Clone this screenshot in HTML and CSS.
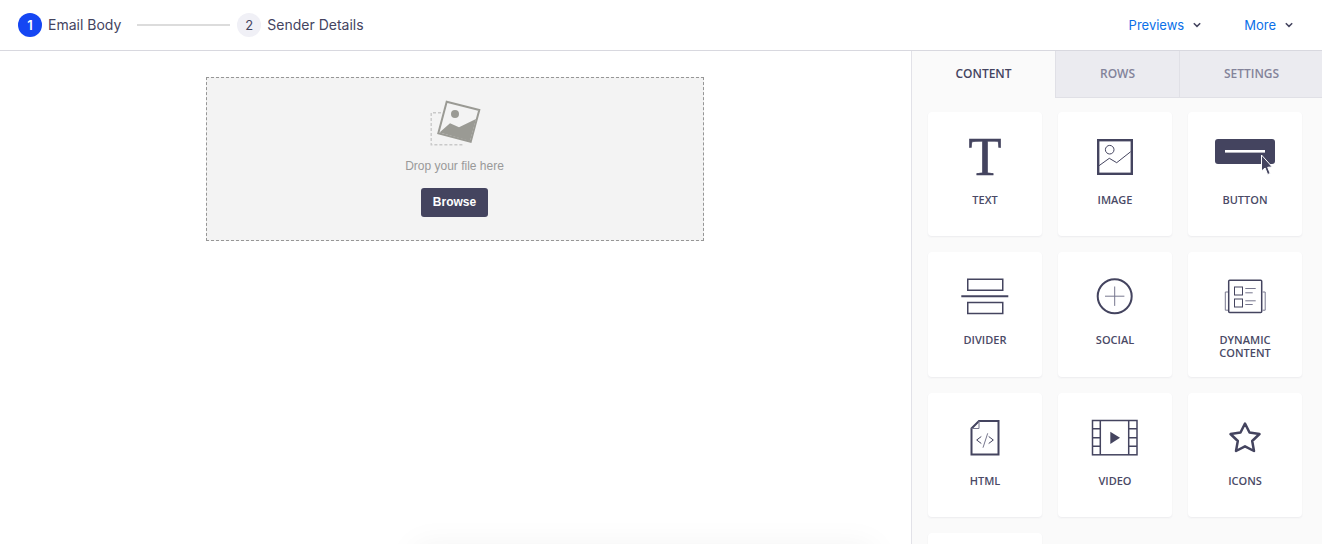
FILE: index.html
```html
<!DOCTYPE html>
<html lang="en">
<head>
    <meta charset="UTF-8">
    <title>Email Body</title>
    <link rel="stylesheet" href="styles.css">
</head>
<body>
    <header class="topbar">
        <div class="steps">
            <span class="step-num active">1</span>
            <span class="step-label">Email Body</span>
            <span class="step-line"></span>
            <span class="step-num">2</span>
            <span class="step-label">Sender Details</span>
        </div>
        <nav class="topnav">
            <a class="topnav-link previews">Previews
                <svg class="chevron" viewBox="0 0 8 6"><path d="M.8 1.2 4 4.4l3.2-3.2"/></svg>
            </a>
            <a class="topnav-link">More
                <svg class="chevron" viewBox="0 0 8 6"><path d="M.8 1.2 4 4.4l3.2-3.2"/></svg>
            </a>
        </nav>
    </header>

    <div class="workspace">
        <main class="canvas">
            <div class="dropzone">
                <svg class="upload-icon" viewBox="0 0 52 48">
                    <path class="upload-dash" d="M12 12.8H2.2v32H35"/>
                    <path class="upload-photo" d="M17.7 1.7 50.3 10l-8.6 31.7L9.3 33.3z"/>
                    <circle class="upload-fill" cx="26" cy="14" r="4"/>
                    <path class="upload-fill" d="M10.500 32.500 21 23.300l9 4L47 19l-6 22z"/>
                </svg>
                <p class="drop-text">Drop your file here</p>
                <button class="browse">Browse</button>
            </div>
            <div class="next-block"></div>
        </main>

        <aside class="sidebar">
            <div class="tabs">
                <div class="tab current">CONTENT</div>
                <div class="tab rows">ROWS</div>
                <div class="tab">SETTINGS</div>
            </div>
            <div class="blocks">
                <div class="block">
                    <svg class="block-icon" viewBox="0 0 60 40"><text class="t-glyph" x="30" y="37" text-anchor="middle">T</text></svg>
                    <div class="block-label">TEXT</div>
                </div>
                <div class="block">
                    <svg class="block-icon" viewBox="0 0 60 40">
                        <rect class="ln25" x="13.200" y="2.200" width="33.600" height="33.600"/>
                        <circle class="ln1" cx="24.700" cy="11.700" r="4.300"/>
                        <path class="ln1" d="M14 27.700l10.300-7.400 7.400 4.400 14-11"/>
                    </svg>
                    <div class="block-label">IMAGE</div>
                </div>
                <div class="block">
                    <svg class="block-icon" viewBox="0 0 60 40">
                        <rect class="solid" x="0" y="1" width="60" height="25" rx="3"/>
                        <rect class="white" x="10" y="12" width="40" height="2.600"/>
                        <path class="cursor" d="M46.500 17v16l3.600-3 2.500 6.500 2.600-1-2.500-6.200 4.500-.4z"/>
                    </svg>
                    <div class="block-label">BUTTON</div>
                </div>
                <div class="block">
                    <svg class="block-icon" viewBox="0 0 60 40">
                        <rect class="ln15" x="12.750" y="1.250" width="35" height="11"/>
                        <path class="ln2" d="M6.300 18.200h47"/>
                        <rect class="ln15" x="12.750" y="24.500" width="35" height="11"/>
                    </svg>
                    <div class="block-label">DIVIDER</div>
                </div>
                <div class="block">
                    <svg class="block-icon" viewBox="0 0 60 40">
                        <circle class="ln2" cx="29.700" cy="18.200" r="17"/>
                        <path class="ln1 soft" d="M20 18.200h19.400M29.700 8.500v19.400"/>
                    </svg>
                    <div class="block-label">SOCIAL</div>
                </div>
                <div class="block">
                    <svg class="block-icon" viewBox="0 0 60 40">
                        <rect class="ln15" x="13.700" y="2.200" width="33" height="32.300" rx="1"/>
                        <path class="ln1 soft" d="M13 14H10.300v18.200H13M47.500 14h2.700v18.200h-2.700"/>
                        <rect class="ln1" x="19.500" y="9" width="8" height="8"/>
                        <rect class="ln1" x="19.500" y="21" width="8" height="8"/>
                        <path class="ln1 soft" d="M30.300 10.500h10.400M30.300 14.800h7.400M30.300 22.800h10.400M30.300 26.500h7.400"/>
                    </svg>
                    <div class="block-label">DYNAMIC<br>CONTENT</div>
                </div>
                <div class="block">
                    <svg class="block-icon" viewBox="0 0 60 40">
                        <path class="ln2" d="M24 2h19.500v33.500h-27V9.500z"/>
                        <path class="ln1 soft" d="M24 2v7.500h-7.500"/>
                        <path class="ln1" d="M26.300 17.500 21.700 21l4.600 3.500M33.700 17.500l4.600 3.500-4.600 3.500"/>
                        <path class="ln1 soft" d="M32.700 14.300 28 28.700"/>
                    </svg>
                    <div class="block-label">HTML</div>
                </div>
                <div class="block">
                    <svg class="block-icon" viewBox="0 0 60 40">
                        <rect class="ln15" x="7.500" y="1.500" width="44.500" height="34.300"/>
                        <path class="ln15" d="M15.300 1.500v34.300M43.700 1.500v34.300M7.500 9.700h7.800M7.500 18.700h7.800M7.500 27.300h7.800M43.700 9.700H52M43.700 18.700H52M43.700 27.300H52"/>
                        <path class="solid" d="M25.300 12.700 35 18.800l-9.700 6.200z"/>
                    </svg>
                    <div class="block-label">VIDEO</div>
                </div>
                <div class="block">
                    <svg class="block-icon" viewBox="0 0 60 40">
                        <path class="star" d="M30 4.500l4.500 9 10 1.500-7.300 7 1.800 10-9-4.700-9 4.700 1.800-10-7.300-7 10-1.500z"/>
                    </svg>
                    <div class="block-label">ICONS</div>
                </div>
                <div class="block"></div>
            </div>
        </aside>
    </div>
</body>
</html>
```

FILE: styles.css
```css
html, body {
    margin: 0;
    padding: 0;
    height: 100%;
    overflow: hidden;
    background: #fff;
    color: #44445f;
    font-family: "Inter", "Liberation Sans", sans-serif;
}
.topbar {
    display: flex;
    justify-content: space-between;
    align-items: center;
    height: 50px;
    padding: 0 29px 0 18px;
    border-bottom: 1px solid #d8d8df;
}
.steps {
    display: flex;
    align-items: center;
}
.step-num {
    width: 24px;
    height: 24px;
    border-radius: 50%;
    background: #f0f0f6;
    font-size: 13px;
    line-height: 24px;
    text-align: center;
}
.step-num.active {
    background: #1546f3;
    color: #fff;
    font-weight: 600;
}
.step-label {
    margin-left: 6px;
    padding-bottom: 1px;
    font-size: 14px;
}
.step-line {
    width: 93px;
    height: 2px;
    margin: 0 7px 0 16px;
    background: #dcdcdc;
}
.topnav {
    display: flex;
    gap: 43px;
}
.topnav-link {
    display: flex;
    align-items: center;
    gap: 9px;
    color: #0b6fe8;
    font-size: 13px;
}
.chevron {
    width: 8px;
    height: 6px;
    fill: none;
    stroke: #44445f;
    stroke-width: 1.5;
}

.workspace {
    display: flex;
    height: 493px;
}
.canvas {
    flex: 1;
    display: flex;
    flex-direction: column;
    align-items: center;
    padding-right: 1px;
    overflow: hidden;
}
.dropzone {
    display: flex;
    flex-direction: column;
    align-items: center;
    box-sizing: border-box;
    flex: none;
    width: 498px;
    height: 164px;
    margin-top: 26px;
    padding: 22px 1px 0 0;
    background: #f3f3f3;
    border: 1px dashed #969696;
}
.upload-icon {
    width: 52px;
    height: 48px;
}
.upload-dash {
    fill: none;
    stroke: #c9c9c9;
    stroke-width: 1.4;
    stroke-dasharray: 3 2;
}
.upload-photo {
    fill: #f3f3f3;
    stroke: #9a9a94;
    stroke-width: 2;
}
.upload-fill {
    fill: #9a9a94;
}
.drop-text {
    margin: 11px 0 0;
    color: #999;
    font-family: "Liberation Sans", sans-serif;
    font-size: 12px;
    line-height: 14px;
}
.browse {
    width: 67px;
    height: 29px;
    margin-top: 15px;
    padding: 0 0 2px;
    border: none;
    border-radius: 3px;
    background: #44445f;
    color: #fff;
    font-family: "Liberation Sans", sans-serif;
    font-size: 12px;
    font-weight: bold;
}
.next-block {
    flex: none;
    align-self: flex-end;
    width: 460px;
    height: 100px;
    margin-top: 304px;
    margin-right: 36px;
    box-shadow: 0 0 30px rgba(0, 0, 0, 0.05);
}

.sidebar {
    flex: none;
    width: 410px;
    border-left: 1px solid #e2e2e8;
    background: #fafafa;
    overflow: hidden;
}
.tabs {
    display: flex;
    height: 47px;
}
.tab {
    box-sizing: border-box;
    flex: 0 0 143px;
    border-bottom: 1px solid #e0e0e6;
    background: #ebebf0;
    color: #83839a;
    font-family: "Open Sans", sans-serif;
    font-size: 12px;
    font-weight: 600;
    line-height: 45px;
    text-align: center;
}
.tab.current {
    flex-basis: 144px;
    border-bottom: none;
    border-right: 1px solid #e0e0e6;
    background: #fafafa;
    color: #44445f;
}
.tab.rows {
    flex-basis: 124px;
    border-right: 1px solid #e0e0e6;
}
.blocks {
    display: grid;
    grid-template-columns: repeat(3, 114px);
    grid-template-rows: 124px 125px 124px 124px;
    gap: 16px;
    padding: 14px 16px;
}
.block {
    box-sizing: border-box;
    padding-top: 26px;
    border-radius: 4px;
    background: #fff;
    box-shadow: 0 1px 2px rgba(60, 60, 90, 0.07);
    text-align: center;
}
.block-icon {
    display: block;
    width: 60px;
    height: 40px;
    margin: 0 auto;
    overflow: visible;
}
.block-label {
    margin-top: 15px;
    color: #4a4a66;
    font-family: "Open Sans", sans-serif;
    font-size: 11px;
    font-weight: 600;
    line-height: 13px;
}

.t-glyph {
    fill: #44445f;
    stroke: #44445f;
    stroke-width: 0.6;
    font-family: "Liberation Serif", serif;
    font-size: 54px;
}
.ln1, .ln15, .ln2, .ln25, .star {
    fill: none;
    stroke: #44445f;
}
.ln1 { stroke-width: 1; }
.ln15 { stroke-width: 1.5; }
.ln2 { stroke-width: 2; }
.ln25 { stroke-width: 2.4; }
.soft { stroke: #77778e; }
.star {
    stroke-width: 2.5;
    stroke-linejoin: round;
}
.solid { fill: #44445f; }
.white { fill: #fff; }
.cursor {
    fill: #44445f;
    stroke: #fff;
    stroke-width: 1;
}
```
